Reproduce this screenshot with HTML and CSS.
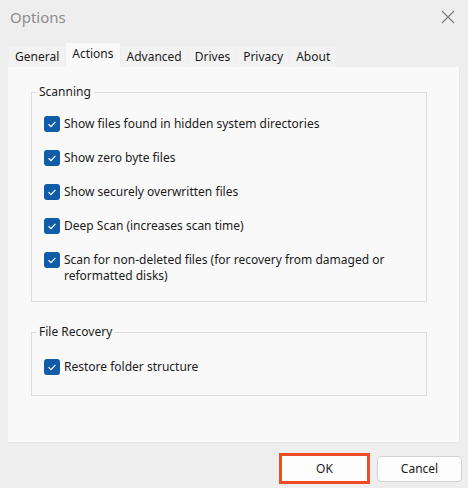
FILE: index.html
```html
<!DOCTYPE html>
<html lang="en">
<head>
  <meta charset="UTF-8" />
  <meta name="viewport" content="width=device-width, initial-scale=1.0"/>
  <title>Options</title>
  <link rel="stylesheet" href="styles.css">
</head>
<body>
  <div class="titlebar">
    <span class="title">Options</span>
    <svg class="close" width="14" height="14" viewBox="0 0 14 14"><path d="M1 1 L13 13 M13 1 L1 13" stroke="#7a7a7a" stroke-width="1.1" fill="none"/></svg>
  </div>

  <div class="tabs">
    <div class="tab">General</div>
    <div class="tab active">Actions</div>
    <div class="tab">Advanced</div>
    <div class="tab">Drives</div>
    <div class="tab">Privacy</div>
    <div class="tab">About</div>
  </div>

  <div class="panel">
    <fieldset class="group">
      <legend>Scanning</legend>
      <div class="opts">
        <label class="opt"><span class="box"><svg width="16" height="16" viewBox="0 0 16 16"><path d="M4.6 8.3 L7 10.6 L11.4 5.8" stroke="#fff" stroke-width="1.2" fill="none"/></svg></span><span>Show files found in hidden system directories</span></label>
        <label class="opt"><span class="box"><svg width="16" height="16" viewBox="0 0 16 16"><path d="M4.6 8.3 L7 10.6 L11.4 5.8" stroke="#fff" stroke-width="1.2" fill="none"/></svg></span><span>Show zero byte files</span></label>
        <label class="opt"><span class="box"><svg width="16" height="16" viewBox="0 0 16 16"><path d="M4.6 8.3 L7 10.6 L11.4 5.8" stroke="#fff" stroke-width="1.2" fill="none"/></svg></span><span>Show securely overwritten files</span></label>
        <label class="opt"><span class="box"><svg width="16" height="16" viewBox="0 0 16 16"><path d="M4.6 8.3 L7 10.6 L11.4 5.8" stroke="#fff" stroke-width="1.2" fill="none"/></svg></span><span>Deep Scan (increases scan time)</span></label>
        <label class="opt"><span class="box"><svg width="16" height="16" viewBox="0 0 16 16"><path d="M4.6 8.3 L7 10.6 L11.4 5.8" stroke="#fff" stroke-width="1.2" fill="none"/></svg></span><span>Scan for non-deleted files (for recovery from damaged or reformatted disks)</span></label>
      </div>
    </fieldset>

    <fieldset class="group recovery">
      <legend>File Recovery</legend>
      <div class="opts">
        <label class="opt"><span class="box"><svg width="16" height="16" viewBox="0 0 16 16"><path d="M4.6 8.3 L7 10.6 L11.4 5.8" stroke="#fff" stroke-width="1.2" fill="none"/></svg></span><span>Restore folder structure</span></label>
      </div>
    </fieldset>
  </div>

  <div class="footer">
    <button class="btn ok">OK</button>
    <button class="btn">Cancel</button>
  </div>
</body>
</html>
```

FILE: styles.css
```css
body { margin: 0; background: #eeeeee; color: #1b1b1b; font-family: "Noto Sans", sans-serif; font-size: 12px; }

.titlebar { height: 34px; display: flex; align-items: center; justify-content: space-between; padding: 0 13px 0 10px; }
.title { font-size: 15px; color: #8c8c8c; }

.tabs { display: flex; align-items: flex-end; height: 24px; margin: 9px 0 0 9px; }
.tab { height: 20px; line-height: 20px; padding: 0 6px; margin-right: 1px; background: #f2f2f2; }
.tab.active { height: 24px; line-height: 22px; background: #f9f9f9; }

.panel { height: 376px; margin: 0 8px; box-sizing: border-box; background: #f9f9f9; border-right: 1px solid #e6e6e6; border-bottom: 1px solid #e6e6e6; padding: 17px 32px 0 23px; }

.group { margin: 0; padding: 0 0 17px 0; border: 1px solid #dcdcdc; }
.group legend { margin-left: 4px; padding: 0 3px; line-height: 16px; }
.group.recovery { margin-top: 22px; padding-bottom: 20px; }
.group.recovery .opts { padding-top: 19px; }

.opts { display: flex; flex-direction: column; gap: 18px; padding: 16px 20px 0 12px; }
.opt { display: flex; align-items: flex-start; gap: 4px; line-height: 16px; }
.box { flex: none; width: 16px; height: 16px; border-radius: 3px; background: #115ca9; display: flex; }

.footer { display: flex; justify-content: flex-end; align-items: center; gap: 7px; padding: 10px 6px 0 0; }
.btn { font: inherit; color: #1b1b1b; background: #fdfdfd; border: 1px solid #d2d2d2; border-radius: 4px; width: 85px; height: 26px; padding: 0; }
.btn.ok { width: 91px; height: 31px; border: 3px solid #ef4b25; border-radius: 0; }
```
